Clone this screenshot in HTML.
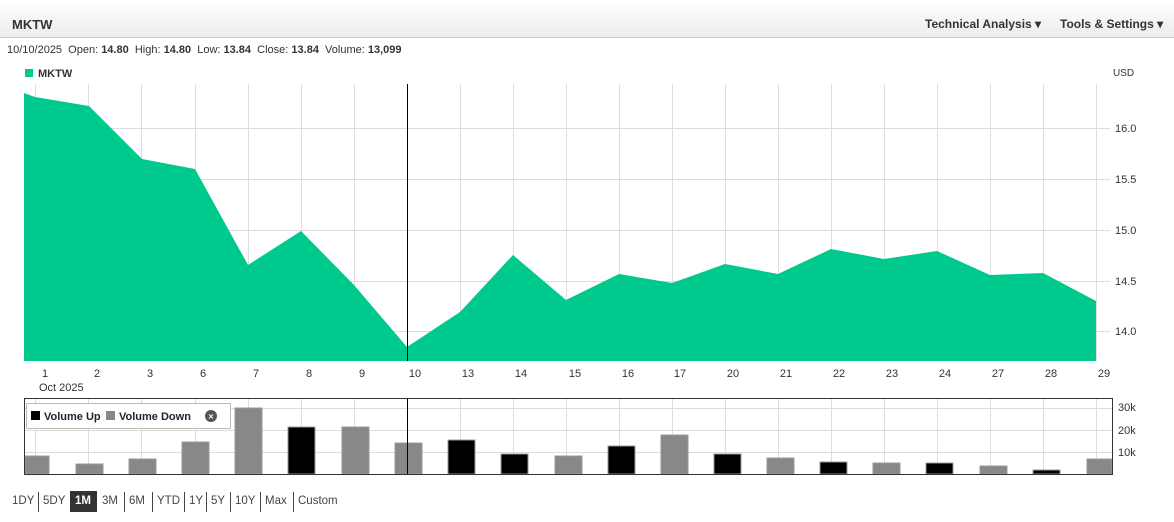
<!DOCTYPE html><html><head><style>
body{margin:0;width:1174px;height:522px;background:#fff;font-family:"Liberation Sans",Arial,sans-serif;position:relative;overflow:hidden;color:#333}
.hdr{position:absolute;left:0;top:0;width:1174px;height:37px;background:linear-gradient(#fff,#ececec);border-bottom:1px solid #ccc}
.t{position:absolute;font-size:13px;white-space:nowrap}
.f{position:absolute;top:495px;font-size:11.5px;color:#444;white-space:nowrap}
.s{position:absolute;top:492px;width:1px;height:20px;background:#444}
</style></head><body>
<div class="hdr"></div>
<div class="t" style="left:12px;top:17px;font-weight:bold;font-size:13px">MKTW</div>
<div class="t" style="left:925px;top:17px;font-weight:bold;font-size:12px">Technical Analysis ▾</div>
<div class="t" style="left:1060px;top:17px;font-weight:bold;font-size:12px">Tools &amp; Settings ▾</div>
<div class="t" style="left:7px;top:44px;font-size:11px">10/10/2025&nbsp; Open: <b>14.80</b>&nbsp; High: <b>14.80</b>&nbsp; Low: <b>13.84</b>&nbsp; Close: <b>13.84</b>&nbsp; Volume: <b>13,099</b></div>
<svg width="1174" height="522" style="position:absolute;left:0;top:0" font-family="Liberation Sans,Arial,sans-serif">
<rect x="25" y="69" width="8" height="8" fill="#00c98d"/>
<text x="38" y="77" font-size="11" font-weight="bold" fill="#333">MKTW</text>
<text x="1113" y="76" font-size="10" fill="#333">USD</text>
<g stroke="#ddd" stroke-width="1">
<line x1="24" y1="128.5" x2="1110" y2="128.5"/><line x1="24" y1="179.5" x2="1110" y2="179.5"/><line x1="24" y1="230.5" x2="1110" y2="230.5"/><line x1="24" y1="281.5" x2="1110" y2="281.5"/><line x1="24" y1="331.5" x2="1110" y2="331.5"/>
<line x1="35.5" y1="84" x2="35.5" y2="361"/><line x1="88.5" y1="84" x2="88.5" y2="361"/><line x1="141.5" y1="84" x2="141.5" y2="361"/><line x1="195.5" y1="84" x2="195.5" y2="361"/><line x1="248.5" y1="84" x2="248.5" y2="361"/><line x1="301.5" y1="84" x2="301.5" y2="361"/><line x1="354.5" y1="84" x2="354.5" y2="361"/><line x1="460.5" y1="84" x2="460.5" y2="361"/><line x1="513.5" y1="84" x2="513.5" y2="361"/><line x1="566.5" y1="84" x2="566.5" y2="361"/><line x1="619.5" y1="84" x2="619.5" y2="361"/><line x1="672.5" y1="84" x2="672.5" y2="361"/><line x1="725.5" y1="84" x2="725.5" y2="361"/><line x1="778.5" y1="84" x2="778.5" y2="361"/><line x1="831.5" y1="84" x2="831.5" y2="361"/><line x1="884.5" y1="84" x2="884.5" y2="361"/><line x1="937.5" y1="84" x2="937.5" y2="361"/><line x1="990.5" y1="84" x2="990.5" y2="361"/><line x1="1043.5" y1="84" x2="1043.5" y2="361"/><line x1="1096.5" y1="84" x2="1096.5" y2="361"/>
</g>
<polygon fill="#00c98d" points="24,361 24,93 35,97 89,106 142,159 195,169 248,265 301,231 354,285 407,347 460,312 513,255 566,300 619,274 672,283 725,264 778,274 831,249 884,259 937,251 990,275 1043,273 1096,301 1096,361"/>
<line x1="407.5" y1="84" x2="407.5" y2="361" stroke="#000"/>
<g font-size="11" fill="#333">
<text x="1115" y="132">16.0</text><text x="1115" y="183">15.5</text><text x="1115" y="234">15.0</text><text x="1115" y="285">14.5</text><text x="1115" y="335">14.0</text>
</g>
<g font-size="11" fill="#333" text-anchor="middle">
<text x="45" y="377">1</text><text x="97" y="377">2</text><text x="150" y="377">3</text><text x="203" y="377">6</text><text x="256" y="377">7</text><text x="309" y="377">8</text><text x="362" y="377">9</text><text x="415" y="377">10</text><text x="468" y="377">13</text><text x="521" y="377">14</text><text x="575" y="377">15</text><text x="628" y="377">16</text><text x="680" y="377">17</text><text x="733" y="377">20</text><text x="786" y="377">21</text><text x="839" y="377">22</text><text x="892" y="377">23</text><text x="945" y="377">24</text><text x="998" y="377">27</text><text x="1051" y="377">28</text><text x="1104" y="377">29</text>
</g>
<text x="39" y="391" font-size="11" fill="#333">Oct 2025</text>
<g stroke="#ddd"><line x1="24" y1="408.5" x2="1112" y2="408.5"/><line x1="24" y1="430.5" x2="1112" y2="430.5"/><line x1="24" y1="452.5" x2="1112" y2="452.5"/>
<line x1="35.5" y1="398" x2="35.5" y2="474"/><line x1="88.5" y1="398" x2="88.5" y2="474"/><line x1="141.5" y1="398" x2="141.5" y2="474"/><line x1="195.5" y1="398" x2="195.5" y2="474"/><line x1="248.5" y1="398" x2="248.5" y2="474"/><line x1="301.5" y1="398" x2="301.5" y2="474"/><line x1="354.5" y1="398" x2="354.5" y2="474"/><line x1="460.5" y1="398" x2="460.5" y2="474"/><line x1="513.5" y1="398" x2="513.5" y2="474"/><line x1="566.5" y1="398" x2="566.5" y2="474"/><line x1="619.5" y1="398" x2="619.5" y2="474"/><line x1="672.5" y1="398" x2="672.5" y2="474"/><line x1="725.5" y1="398" x2="725.5" y2="474"/><line x1="778.5" y1="398" x2="778.5" y2="474"/><line x1="831.5" y1="398" x2="831.5" y2="474"/><line x1="884.5" y1="398" x2="884.5" y2="474"/><line x1="937.5" y1="398" x2="937.5" y2="474"/><line x1="990.5" y1="398" x2="990.5" y2="474"/><line x1="1043.5" y1="398" x2="1043.5" y2="474"/><line x1="1096.5" y1="398" x2="1096.5" y2="474"/></g>
<g stroke="#999" stroke-width="1">
<rect x="25" y="456" width="24" height="18" fill="#888"/>
<rect x="76" y="464" width="27" height="10" fill="#888"/>
<rect x="129" y="459" width="27" height="15" fill="#888"/>
<rect x="182" y="442" width="27" height="32" fill="#888"/>
<rect x="235" y="408" width="27" height="66" fill="#888"/>
<rect x="288" y="427" width="27" height="47" fill="#000"/>
<rect x="342" y="427" width="27" height="47" fill="#888"/>
<rect x="395" y="443" width="27" height="31" fill="#888"/>
<rect x="448" y="440" width="27" height="34" fill="#000"/>
<rect x="501" y="454" width="27" height="20" fill="#000"/>
<rect x="555" y="456" width="27" height="18" fill="#888"/>
<rect x="608" y="446" width="27" height="28" fill="#000"/>
<rect x="661" y="435" width="27" height="39" fill="#888"/>
<rect x="714" y="454" width="27" height="20" fill="#000"/>
<rect x="767" y="458" width="27" height="16" fill="#888"/>
<rect x="820" y="462" width="27" height="12" fill="#000"/>
<rect x="873" y="463" width="27" height="11" fill="#888"/>
<rect x="926" y="463" width="27" height="11" fill="#000"/>
<rect x="980" y="466" width="27" height="8" fill="#888"/>
<rect x="1033" y="470" width="27" height="4" fill="#000"/>
<rect x="1087" y="459" width="25" height="15" fill="#888"/>
</g>
<line x1="407.5" y1="398" x2="407.5" y2="474" stroke="#000"/>
<rect x="24.5" y="398.5" width="1088" height="76" fill="none" stroke="#333"/>
<rect x="26.5" y="403.5" width="204" height="25" fill="#fff" stroke="#bbb"/>
<rect x="31" y="411" width="9" height="9" fill="#000"/><text x="44" y="420" font-size="11" font-weight="bold" fill="#223">Volume Up</text>
<rect x="106" y="411" width="9" height="9" fill="#888"/><text x="119" y="420" font-size="11" font-weight="bold" fill="#223">Volume Down</text>
<circle cx="211" cy="416" r="6" fill="#555"/><text x="211" y="419.5" font-size="9" fill="#fff" text-anchor="middle" font-weight="bold">×</text>
<g font-size="11" fill="#333"><text x="1118" y="411">30k</text><text x="1118" y="434">20k</text><text x="1118" y="456">10k</text></g>
</svg>
<span class="f" style="left:12px">1DY</span><div class="s" style="left:38px"></div>
<span class="f" style="left:43px">5DY</span>
<div style="position:absolute;left:70px;top:491px;width:27px;height:21px;background:#333"></div><span class="f" style="left:75px;color:#fff;font-weight:bold">1M</span>
<span class="f" style="left:102px">3M</span><div class="s" style="left:124px"></div>
<span class="f" style="left:129px">6M</span><div class="s" style="left:152px"></div>
<span class="f" style="left:157px">YTD</span><div class="s" style="left:184px"></div>
<span class="f" style="left:189px">1Y</span><div class="s" style="left:206px"></div>
<span class="f" style="left:211px">5Y</span><div class="s" style="left:230px"></div>
<span class="f" style="left:235px">10Y</span><div class="s" style="left:260px"></div>
<span class="f" style="left:265px">Max</span><div class="s" style="left:293px"></div>
<span class="f" style="left:298px">Custom</span>
</body></html>
